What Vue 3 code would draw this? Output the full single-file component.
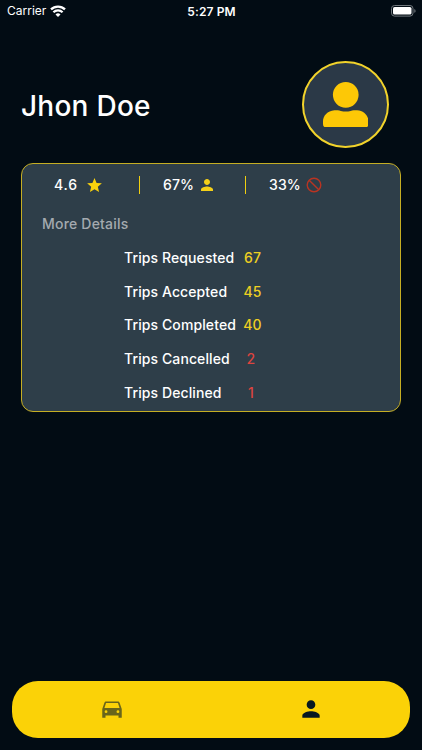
<script setup>
import { ref } from 'vue'

// Trip totals shown in the details list
const trips = ref([
  { label: 'Requested', count: 67 },
  { label: 'Accepted', count: 45 },
  { label: 'Completed', count: 40 },
  { label: 'Cancelled', count: 2, bad: true },
  { label: 'Declined', count: 1, bad: true }
])

// Active tab in the bottom bar
const tab = ref('profile')
</script>

<template>
  <div class="screen">

    <!-- Status bar -->
    <div class="status-bar">
      <div class="carrier">
        <span>Carrier</span>
        <svg class="wifi" viewBox="0 0 16 12">
          <path d="M8 12l2.5-2.6a3.6 3.6 0 0 0-5 0z" fill="#fff" />
          <path d="M3.4 7.3a6.6 6.6 0 0 1 9.2 0M1 4.4a10 10 0 0 1 14 0" fill="none" stroke="#fff" stroke-width="2.3" />
        </svg>
      </div>
      <span class="time">5:27 PM</span>
      <svg class="battery" viewBox="0 0 25 12">
        <rect x="0.5" y="0.5" width="21.5" height="10.6" rx="3" fill="none" stroke="#70777c" />
        <rect x="2" y="2" width="18.5" height="7.6" rx="1.6" fill="#fff" />
        <path d="M23.3 4v3.8q1.3-.6 1.3-1.9T23.3 4z" fill="#70777c" />
      </svg>
    </div>

    <!-- Name and avatar -->
    <div class="header">
      <h1>Jhon Doe</h1>
      <div class="avatar">
        <svg viewBox="0 0 46 46">
          <circle cx="23" cy="13" r="13" />
          <path d="M11.5 28.5C14 28.5 16 28.6 18 29.2Q23 30.6 28 29.2C30 28.6 32 28.5 34.5 28.5C41.5 29 46 34 46 40v2.4Q46 46 42.4 46H3.6Q0 46 0 42.4V40C0 34 4.5 29 11.5 28.5z" />
        </svg>
      </div>
    </div>

    <!-- Stats card -->
    <div class="card">
      <div class="stats">
        <div class="stat rating">
          <span>4.6</span>
          <svg class="star" viewBox="2 2 20 19">
            <path d="M12 17.27L18.18 21l-1.64-7.03L22 9.24l-7.19-.61L12 2 9.19 8.63 2 9.24l5.46 4.73L5.82 21z" />
          </svg>
        </div>
        <div class="divider"></div>
        <div class="stat accepted">
          <span>67%</span>
          <svg class="person" viewBox="4 4 16 16">
            <path d="M12 12c2.21 0 4-1.79 4-4s-1.79-4-4-4-4 1.79-4 4 1.79 4 4 4zm0 2c-2.67 0-8 1.34-8 4v2h16v-2c0-2.66-5.33-4-8-4z" />
          </svg>
        </div>
        <div class="divider"></div>
        <div class="stat declined">
          <span>33%</span>
          <svg class="block" viewBox="0 0 16 16">
            <circle cx="8" cy="8" r="6.8" />
            <path d="M3.2 3.2l9.6 9.6" />
          </svg>
        </div>
      </div>

      <p class="more">More Details</p>

      <ul class="trips">
        <li v-for="trip in trips" :key="trip.label">
          <span class="label">Trips {{ trip.label }}</span>
          <span class="count" :class="{ bad: trip.bad }">{{ trip.count }}</span>
        </li>
      </ul>
    </div>

    <!-- Bottom tabs -->
    <nav class="tabs">
      <button :class="{ active: tab === 'trips' }" @click="tab = 'trips'">
        <svg viewBox="0 0 24 24">
          <path fill-rule="evenodd" d="M18.92 6.01C18.72 5.42 18.16 5 17.5 5h-11c-.66 0-1.21.42-1.42 1.01L3 12v8h3v-2h12v2h3v-8l-2.08-5.99zM6.5 15.8a1.3 1.3 0 1 1 0-2.6 1.3 1.3 0 0 1 0 2.6zm11 0a1.3 1.3 0 1 1 0-2.6 1.3 1.3 0 0 1 0 2.6zM5 11l1.5-4.5h11L19 11H5z" />
        </svg>
      </button>
      <button :class="{ active: tab === 'profile' }" @click="tab = 'profile'">
        <svg viewBox="0 0 24 24">
          <path d="M12 12c2.21 0 4-1.79 4-4s-1.79-4-4-4-4 1.79-4 4 1.79 4 4 4zm0 2c-2.67 0-8 1.34-8 4v2h16v-2c0-2.66-5.33-4-8-4z" />
        </svg>
      </button>
    </nav>

  </div>
</template>

<style>
body {
  margin: 0;
  background: #020c14;
}
</style>

<style scoped>
.screen {
  display: flex;
  flex-direction: column;
  width: 422px;
  height: 750px;
  box-sizing: border-box;
  background: #020c14;
  color: #fff;
  font-family: Inter, 'Liberation Sans', sans-serif;
}

/* Status bar */
.status-bar {
  display: grid;
  grid-template-columns: 1fr auto 1fr;
  align-items: center;
  height: 22px;
  padding: 0 6px 0 7px;
  font-size: 12px;
}

.carrier {
  display: flex;
  align-items: center;
  gap: 4px;
  height: 20px;
}

.carrier span {
  margin-bottom: 1px;
}

.wifi {
  width: 16px;
  height: 12px;
  margin-bottom: 1px;
}

.time {
  font-weight: 600;
  letter-spacing: 0.1px;
}

.battery {
  justify-self: end;
  width: 25px;
  height: 12px;
}

/* Name and avatar */
.header {
  display: flex;
  align-items: center;
  justify-content: space-between;
  height: 87px;
  margin: 39px 33px 15px 21px;
}

h1 {
  margin: 2px 0 0;
  font-size: 28px;
  font-weight: 500;
  letter-spacing: 0.25px;
}

.avatar {
  display: flex;
  align-items: center;
  justify-content: center;
  width: 87px;
  height: 87px;
  box-sizing: border-box;
  border: 2px solid #f2d32b;
  border-radius: 50%;
  background: #2b3947;
}

.avatar svg {
  width: 45.5px;
  height: 45.5px;
  fill: #fdc806;
}

/* Stats card */
.card {
  width: 380px;
  height: 249px;
  margin-left: 21px;
  box-sizing: border-box;
  border: 1px solid #c5ae23;
  border-radius: 12px;
  background: #2e3e49;
  font-size: 14px;
  font-weight: 500;
}

.stats {
  display: flex;
  align-items: center;
  height: 18px;
  margin-top: 12px;
  padding-left: 32px;
}

.stat {
  display: flex;
  align-items: center;
  height: 18px;
  box-sizing: border-box;
  padding-bottom: 1px;
  letter-spacing: 0.1px;
}

.rating {
  width: 85px;
  gap: 9px;
  letter-spacing: 0.8px;
}

.accepted {
  width: 105px;
  padding-left: 23px;
  gap: 7px;
}

.declined {
  padding-left: 23px;
  gap: 5px;
}

.divider {
  flex: none;
  width: 1px;
  height: 18px;
  background: #f0cf10;
}

.star {
  width: 15px;
  height: 14px;
  fill: #fbd30d;
}

.person {
  width: 12px;
  height: 12px;
  margin-top: 1px;
  fill: #f5d018;
}

.block {
  width: 16px;
  height: 16px;
  margin-top: 1px;
  fill: none;
  stroke: #b93422;
  stroke-width: 1.4;
}

.more {
  margin: 21px 0 0 20px;
  color: #a4aaaf;
  line-height: 18px;
  letter-spacing: 0.2px;
}

.trips {
  margin: 8px 0 0 102px;
  padding: 0;
  list-style: none;
}

.trips li {
  display: flex;
  align-items: center;
  height: 33.6px;
}

.label {
  width: 111px;
  letter-spacing: 0.1px;
  white-space: nowrap;
}

.count {
  width: 35px;
  color: #edcf22;
  text-align: center;
  letter-spacing: 0.2px;
}

.count.bad {
  width: 32px;
  color: #dc443f;
}

/* Bottom tabs */
.tabs {
  display: flex;
  justify-content: space-around;
  align-items: center;
  height: 57px;
  margin: auto 12px 12px;
  border-radius: 26px;
  background: #fbd207;
}

.tabs button {
  flex: 1;
  display: flex;
  justify-content: center;
  padding: 0 0 1px;
  border: none;
  background: none;
  cursor: pointer;
}

.tabs svg {
  width: 26px;
  height: 26px;
  fill: #69651b;
}

.tabs .active svg {
  fill: #071821;
}
</style>
